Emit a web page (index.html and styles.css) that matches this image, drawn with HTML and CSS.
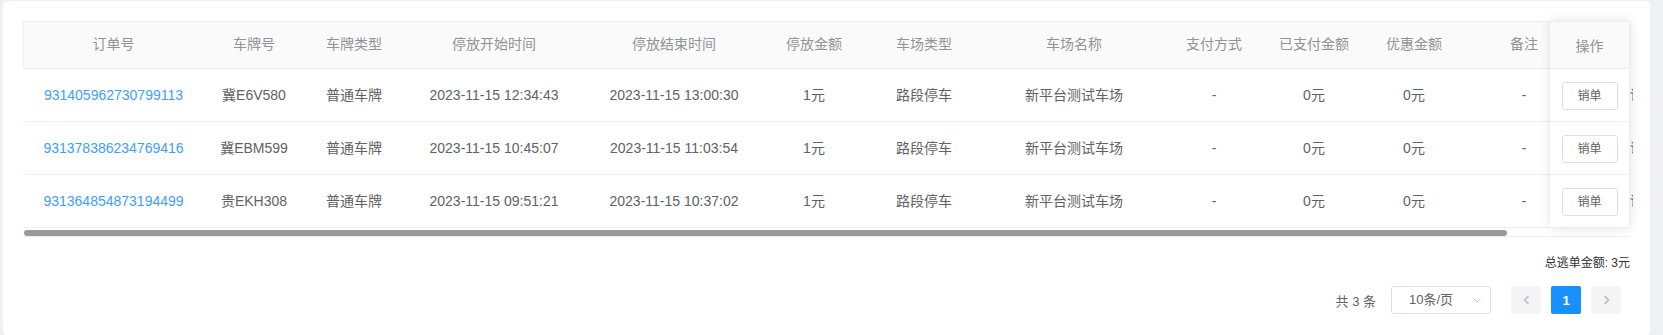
FILE: index.html
```html
<!DOCTYPE html>
<html lang="zh-CN">
<head>
<meta charset="utf-8">
<title>订单列表</title>
<link rel="stylesheet" href="styles.css">
</head>
<body>
<div class="card">
  <div class="table">
    <div class="scroll">
      <div class="row head">
        <div class="cell">订单号</div>
        <div class="cell">车牌号</div>
        <div class="cell">车牌类型</div>
        <div class="cell">停放开始时间</div>
        <div class="cell">停放结束时间</div>
        <div class="cell">停放金额</div>
        <div class="cell">车场类型</div>
        <div class="cell">车场名称</div>
        <div class="cell">支付方式</div>
        <div class="cell">已支付金额</div>
        <div class="cell">优惠金额</div>
        <div class="cell">备注</div>
        <div class="cell"></div>
      </div>
      <div class="row">
        <div class="cell link">931405962730799113</div>
        <div class="cell">冀E6V580</div>
        <div class="cell">普通车牌</div>
        <div class="cell">2023-11-15 12:34:43</div>
        <div class="cell">2023-11-15 13:00:30</div>
        <div class="cell">1元</div>
        <div class="cell">路段停车</div>
        <div class="cell">新平台测试车场</div>
        <div class="cell">-</div>
        <div class="cell">0元</div>
        <div class="cell">0元</div>
        <div class="cell">-</div>
        <div class="cell"></div>
      </div>
      <div class="row">
        <div class="cell link">931378386234769416</div>
        <div class="cell">冀EBM599</div>
        <div class="cell">普通车牌</div>
        <div class="cell">2023-11-15 10:45:07</div>
        <div class="cell">2023-11-15 11:03:54</div>
        <div class="cell">1元</div>
        <div class="cell">路段停车</div>
        <div class="cell">新平台测试车场</div>
        <div class="cell">-</div>
        <div class="cell">0元</div>
        <div class="cell">0元</div>
        <div class="cell">-</div>
        <div class="cell"></div>
      </div>
      <div class="row">
        <div class="cell link">931364854873194499</div>
        <div class="cell">贵EKH308</div>
        <div class="cell">普通车牌</div>
        <div class="cell">2023-11-15 09:51:21</div>
        <div class="cell">2023-11-15 10:37:02</div>
        <div class="cell">1元</div>
        <div class="cell">路段停车</div>
        <div class="cell">新平台测试车场</div>
        <div class="cell">-</div>
        <div class="cell">0元</div>
        <div class="cell">0元</div>
        <div class="cell">-</div>
        <div class="cell"></div>
      </div>
    </div>
    <div class="fixed">
      <div class="fcell fhead">操作</div>
      <div class="fcell"><button class="btn">销单</button><span class="peek">详</span></div>
      <div class="fcell"><button class="btn">销单</button><span class="peek">详</span></div>
      <div class="fcell"><button class="btn">销单</button><span class="peek">详</span></div>
    </div>
    <div class="scrollbar"><div class="thumb"></div></div>
  </div>

  <div class="total">总逃单金额: 3元</div>

  <div class="pager">
    <span class="count">共 3 条</span>
    <div class="select">
      <span class="select-text">10条/页</span>
      <svg class="select-arrow" width="8" height="5" viewBox="0 0 8 5"><path d="M0.5 0.5 L4 4 L7.5 0.5" fill="none" stroke="#c0c4cc" stroke-width="1"/></svg>
    </div>
    <div class="pbtn disabled"><svg width="7" height="10" viewBox="0 0 7 10"><path d="M5.5 1 L1.5 5 L5.5 9" fill="none" stroke="#c0c4cc" stroke-width="1.8"/></svg></div>
    <div class="pbtn active">1</div>
    <div class="pbtn disabled"><svg width="7" height="10" viewBox="0 0 7 10"><path d="M1.5 1 L5.5 5 L1.5 9" fill="none" stroke="#c0c4cc" stroke-width="1.8"/></svg></div>
  </div>
</div>
</body>
</html>
```
FILE: styles.css
```css
* { box-sizing: border-box; }
html, body { margin: 0; padding: 0; }
body {
  background: #eef0f3;
  font-family: "Liberation Sans", "Noto Sans CJK SC", sans-serif;
  font-size: 14px;
  color: #606266;
  height: 335px;
  overflow: hidden;
}
.card {
  margin: 1px 13px 0 3px;
  padding: 20px;
  background: #fff;
  border-radius: 4px;
  height: 334px;
}
.table {
  position: relative;
  width: 1607px;
}
.scroll {
  overflow: hidden;
  width: 1607px;
}
.row {
  display: grid;
  grid-template-columns: 181px 100px 100px 180px 180px 100px 120px 180px 100px 100px 100px 120px 180px;
  width: 1741px;
  height: 53px;
  border-bottom: 1px solid #ebeef5;
}
.row.head {
  height: 48px;
  background: #fafafa;
  box-shadow: inset 1px 1px 0 #ebeef5;
  color: #909399;
}
.cell {
  display: flex;
  align-items: center;
  justify-content: center;
  white-space: nowrap;
  line-height: 23px;
}
.link { color: #409eff; }
.fixed {
  position: absolute;
  top: 0;
  right: 0;
  width: 80px;
  background: #fff;
  box-shadow: 0 0 10px rgba(0, 0, 0, 0.12);
  border-right: 1px solid #ebeef5;
}
.fcell {
  position: relative;
  height: 53px;
  display: flex;
  align-items: center;
  justify-content: center;
  border-bottom: 1px solid #ebeef5;
  padding-top: 2px;
}
.fcell.fhead {
  height: 48px;
  padding-top: 0;
  background: #fafafa;
  color: #909399;
  border-top: 1px solid #ebeef5;
}
.btn {
  width: 56px;
  height: 28px;
  padding: 0;
  border: 1px solid #dcdfe6;
  border-radius: 3px;
  background: #fff;
  color: #606266;
  font-family: inherit;
  font-size: 12px;
  line-height: 26px;
}
.peek {
  position: absolute;
  right: -4px;
  top: 19px;
  width: 3px;
  overflow: hidden;
  font-size: 13px;
  line-height: 14px;
  color: #5a5478;
}
.scrollbar {
  height: 9px;
  padding-top: 2px;
  border-bottom: 1px solid #ebeef5;
}
.thumb {
  margin-left: 1px;
  width: 1483px;
  height: 6px;
  border-radius: 3px;
  background: #999;
}
.total {
  margin-top: 16px;
  text-align: right;
  font-size: 12px;
  line-height: 20px;
  color: #303133;
}
.pager {
  margin-top: 13px;
  display: flex;
  justify-content: flex-end;
  align-items: center;
  padding-right: 9px;
  font-size: 13px;
  height: 28px;
}
.count {
  color: #606266;
  margin-right: 15px;
  white-space: pre;
}
.select {
  position: relative;
  width: 100px;
  height: 28px;
  border: 1px solid #dcdfe6;
  border-radius: 3px;
  display: flex;
  align-items: center;
  padding-left: 17px;
  color: #606266;
  margin-right: 20px;
}
.select-text { line-height: 26px; }
.select-arrow {
  position: absolute;
  right: 9px;
  top: 11px;
}
.pbtn {
  width: 30px;
  height: 28px;
  border-radius: 2px;
  display: flex;
  align-items: center;
  justify-content: center;
  margin-left: 10px;
  background: #f4f4f5;
}
.select + .pbtn { margin-left: 0; }
.pbtn.active {
  background: #1890ff;
  color: #fff;
  font-weight: bold;
}
```
